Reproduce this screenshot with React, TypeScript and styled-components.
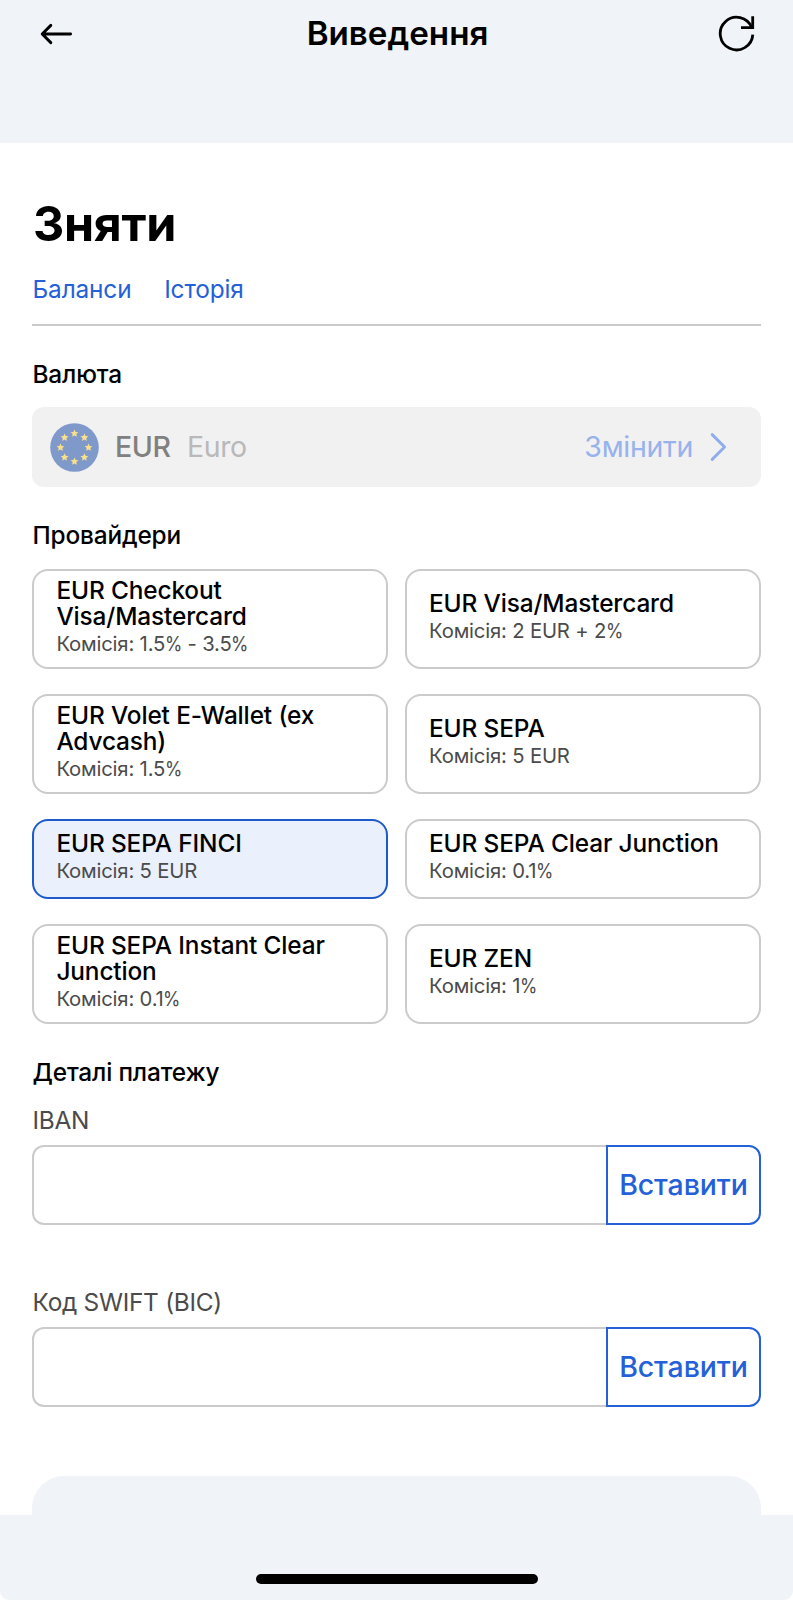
import React from 'react';
import styled, { createGlobalStyle } from 'styled-components';

const GlobalStyle = createGlobalStyle`
  * { box-sizing: border-box; }
  body { margin: 0; background: #fff; font-family: Inter, "Liberation Sans", sans-serif; color: #000; }
  h1, h2, p { margin: 0; }
  button { font: inherit; color: inherit; background: none; border: 0; padding: 0; margin: 0; cursor: pointer; }
`;

const Screen = styled.div`
  width: 793px;
  height: 1600px;
  display: flex;
  flex-direction: column;
  background: #f0f3f8;
  border-radius: 0 0 9px 9px;
  overflow: hidden;
`;

const Header = styled.header`
  flex: none;
  height: 142.7px;
  padding: 0 38px 0 40px;
`;

const HeaderRow = styled.div`
  height: 67.4px;
  display: grid;
  grid-template-columns: 60px 1fr 60px;
  align-items: center;
`;

const Title = styled.h2`
  padding-bottom: 1.4px;
  font-size: 33.2px;
  line-height: 40px;
  font-weight: 600;
  text-align: center;
`;

const IconButton = styled.button<{ $end?: boolean }>`
  display: flex;
  justify-content: ${(p) => (p.$end ? 'flex-end' : 'flex-start')};
`;

const Main = styled.main`
  flex: none;
  height: 1372.3px;
  display: flex;
  flex-direction: column;
  padding: 50.8px 32px 0;
  background: #fff;
  overflow: hidden;
`;

const Heading = styled.h1`
  padding-top: 1px;
  margin: 0 0 -1px 1px;
  font-size: 48.4px;
  line-height: 60px;
  font-weight: 700;
  letter-spacing: -0.3px;
`;

const Links = styled.nav`
  display: flex;
  gap: 32.8px;
  margin-top: 20.3px;
  padding: 0 0 20.2px 0.5px;
  border-bottom: 2px solid #cacaca;
`;

const Link = styled.a`
  font-size: 24.4px;
  line-height: 30px;
  letter-spacing: -0.15px;
  color: #2460d8;
`;

const Label = styled.h2<{ $top: number }>`
  margin-top: ${(p) => p.$top}px;
  padding-left: 0.5px;
  font-size: 24.4px;
  line-height: 30px;
  font-weight: 480;
  letter-spacing: -0.16px;
`;

const CurrencyBox = styled.div`
  flex: none;
  height: 80.3px;
  margin-top: 18.2px;
  padding: 0 34px 0 18px;
  display: flex;
  align-items: center;
  border-radius: 12px;
  background: #f1f1f1;
  font-size: 28.5px;
  line-height: 36px;
`;

const Code = styled.span`
  margin-left: 16px;
  color: #808080;
  font-weight: 480;
  letter-spacing: -0.4px;
`;

const Name = styled.span`
  margin-left: 16.5px;
  color: #b9b9b9;
  letter-spacing: -0.4px;
`;

const Change = styled.button`
  margin-left: auto;
  display: flex;
  align-items: center;
  gap: 17px;
  color: #97b2ec;
  letter-spacing: -0.3px;
`;

const Providers = styled.div`
  margin-top: 18.4px;
  display: grid;
  grid-template-columns: 1fr 1fr;
  grid-template-rows: 100.2px 100.2px 80.4px 100.2px;
  gap: 24.8px 16.3px;
`;

const Provider = styled.button<{ $active?: boolean }>`
  display: flex;
  flex-direction: column;
  justify-content: center;
  gap: 2.7px;
  padding: 0 22.4px 4.6px;
  text-align: left;
  border: 2px solid ${(p) => (p.$active ? '#1e5ac9' : '#cbcbcb')};
  border-radius: 16px;
  background: ${(p) => (p.$active ? '#eaf0fc' : '#fff')};
`;

const ProviderName = styled.span`
  font-size: 24.4px;
  line-height: 26.3px;
  font-weight: 480;
  letter-spacing: -0.13px;
`;

const Fee = styled.span`
  font-size: 20.3px;
  line-height: 24px;
  font-weight: 370;
  letter-spacing: -0.18px;
  color: #4b4b4b;
`;

const Percent = styled.span`
  display: inline-block;
  margin: 0 -2.4px 0 -0.6px;
  transform: scaleX(0.87);
  transform-origin: left;
`;

const Field = styled.label<{ $top: number }>`
  margin-top: ${(p) => p.$top}px;
  display: flex;
  flex-direction: column;
  gap: 10px;
`;

const FieldName = styled.span`
  padding-left: 0.5px;
  font-size: 24.4px;
  line-height: 30px;
  letter-spacing: -0.28px;
  color: #4b4b4b;
`;

const FieldRow = styled.div`
  display: flex;
  height: 80.3px;
`;

const Input = styled.input`
  flex: 1;
  min-width: 0;
  padding: 0 20px;
  border: 2px solid #cbcbcb;
  border-right: 0;
  border-radius: 12px 0 0 12px;
  background: #fff;
  font: inherit;
  font-size: 28.5px;
  outline: none;
`;

const Paste = styled.button`
  width: 155px;
  padding-bottom: 1.6px;
  border: 2px solid #2460d8;
  border-radius: 0 12px 12px 0;
  color: #2460d8;
  font-size: 28.5px;
  font-weight: 480;
  letter-spacing: -0.1px;
`;

const Summary = styled.section`
  flex: 1;
  margin-top: 69.2px;
  border-radius: 32px 32px 0 0;
  background: #f0f3f8;
`;

const Footer = styled.footer`
  flex: 1;
  display: flex;
  justify-content: center;
  align-items: flex-end;
  padding-bottom: 16px;
`;

const HomeBar = styled.div`
  width: 282px;
  height: 10.5px;
  border-radius: 5.25px;
  background: #000;
`;

const providers = [
  { name: 'EUR Checkout Visa/Mastercard', fee: '1.5% - 3.5%' },
  { name: 'EUR Visa/Mastercard', fee: '2 EUR + 2%' },
  { name: 'EUR Volet E-Wallet (ex Advcash)', fee: '1.5%' },
  { name: 'EUR SEPA', fee: '5 EUR' },
  { name: 'EUR SEPA FINCI', fee: '5 EUR', active: true },
  { name: 'EUR SEPA Clear Junction', fee: '0.1%' },
  { name: 'EUR SEPA Instant Clear Junction', fee: '0.1%' },
  { name: 'EUR ZEN', fee: '1%' },
];

const FeeText = ({ value }: { value: string }) => (
  <Fee>
    Комісія:{' '}
    {value.split(/(%)/).map((part, i) => (part === '%' ? <Percent key={i}>%</Percent> : part))}
  </Fee>
);

const starPoints = Array.from({ length: 10 }, (_, i) => {
  const r = i % 2 ? 1.9 : 4.1;
  const a = (Math.PI * i) / 5;
  return `${(r * Math.sin(a)).toFixed(2)},${(-r * Math.cos(a)).toFixed(2)}`;
}).join(' ');

const EuFlag = () => (
  <svg width="49" height="49" viewBox="-24.5 -24.5 49 49">
    <circle r="24.3" fill="#7f99cb" />
    {Array.from({ length: 8 }, (_, i) => {
      const a = (Math.PI * i) / 4;
      return (
        <polygon
          key={i}
          points={starPoints}
          fill="#fbe08a"
          transform={`translate(${14 * Math.sin(a)} ${-14 * Math.cos(a)})`}
        />
      );
    })}
  </svg>
);

const BackIcon = () => (
  <svg width="33" height="22" viewBox="0 0 33 22" fill="none" stroke="#000" strokeWidth="2.9" strokeLinecap="round" strokeLinejoin="round">
    <path d="M30.6 11H2.4M10.8 2.4L2.2 11l8.6 8.6" />
  </svg>
);

const RefreshIcon = () => (
  <svg width="37" height="38" viewBox="0 0 37 38" fill="none" stroke="#000" strokeWidth="2.8">
    <path d="M34.8 19.6A16.3 16.3 0 1 1 33.7 12.6" />
    <path d="M34.7 1.3V12.7H23" />
  </svg>
);

const Chevron = () => (
  <svg width="17" height="30" viewBox="0 0 17 30" fill="none" stroke="#8facec" strokeWidth="2.9" strokeLinecap="round" strokeLinejoin="round">
    <path d="M2.2 2.6L14.6 15 2.2 27.4" />
  </svg>
);

export default function App() {
  return (
    <Screen>
      <GlobalStyle />
      <Header>
        <HeaderRow>
          <IconButton aria-label="Назад"><BackIcon /></IconButton>
          <Title>Виведення</Title>
          <IconButton $end aria-label="Оновити"><RefreshIcon /></IconButton>
        </HeaderRow>
      </Header>
      <Main>
        <Heading>Зняти</Heading>
        <Links>
          <Link>Баланси</Link>
          <Link>Історія</Link>
        </Links>
        <Label $top={32.8}>Валюта</Label>
        <CurrencyBox>
          <EuFlag />
          <Code>EUR</Code>
          <Name>Euro</Name>
          <Change>
            Змінити
            <Chevron />
          </Change>
        </CurrencyBox>
        <Label $top={33}>Провайдери</Label>
        <Providers>
          {providers.map((p) => (
            <Provider key={p.name} $active={p.active}>
              <ProviderName>{p.name}</ProviderName>
              <FeeText value={p.fee} />
            </Provider>
          ))}
        </Providers>
        <Label $top={32.8}>Деталі платежу</Label>
        <Field $top={18.3}>
          <FieldName>IBAN</FieldName>
          <FieldRow>
            <Input />
            <Paste>Вставити</Paste>
          </FieldRow>
        </Field>
        <Field $top={61.4}>
          <FieldName>Код SWIFT (BIC)</FieldName>
          <FieldRow>
            <Input />
            <Paste>Вставити</Paste>
          </FieldRow>
        </Field>
        <Summary />
      </Main>
      <Footer>
        <HomeBar />
      </Footer>
    </Screen>
  );
}
